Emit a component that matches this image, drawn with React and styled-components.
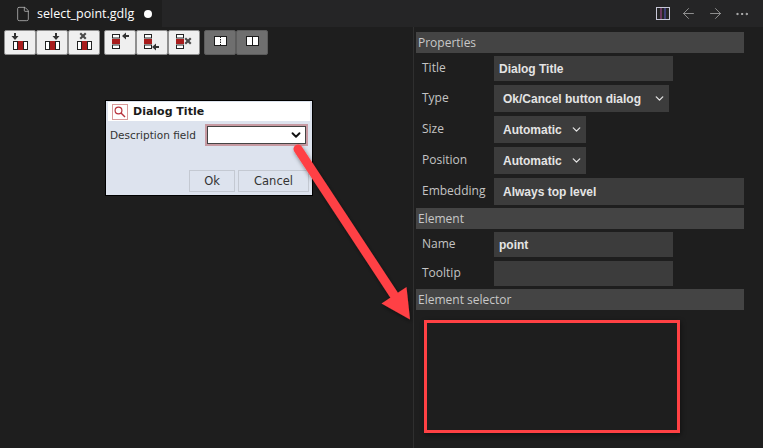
import React from "react";
import styled, { createGlobalStyle } from "styled-components";
import { File, ArrowLeft, ArrowRight, Ellipsis, ChevronDown } from "lucide-react";

const Global = createGlobalStyle`
  html, body { margin: 0; padding: 0; background: #1e1e1e; }
  body { width: 763px; height: 448px; overflow: hidden; font-family: "Open Sans", "Liberation Sans", sans-serif; }
`;

// marker drawn beside the little box groups in the toolbar
const Marker = ({ kind, x, y }) => {
  if (kind === "down") return <path d={`M${x - 1} ${y - 3}h2v3h2.5l-3.5 4-3.5-4h2.5z`} fill="#333" />;
  if (kind === "left") return <path d={`M${x} ${y}l4-3.5v2.5h3v2h-3v2.5z`} fill="#333" />;
  return <path d={`M${x - 3.5} ${y - 2}l1.5-1.5 2 2 2-2 1.5 1.5-2 2 2 2-1.5 1.5-2-2-2 2-1.5-1.5 2-2z`} fill="#4a4a4a" />;
};

const HGroup = ({ marker, mx }) => (
  <svg width="32" height="25" viewBox="0 0 32 25">
    <rect x="9.5" y="11.5" width="4" height="8" fill="#fff" stroke="#222" />
    <rect x="14" y="11" width="5" height="9" fill="#a81c1c" />
    <rect x="19.5" y="11.5" width="4" height="8" fill="#fff" stroke="#222" />
    <Marker kind={marker} x={mx} y={6} />
  </svg>
);

const VGroup = ({ marker, mx, my }) => (
  <svg width="32" height="25" viewBox="0 0 32 25">
    <rect x="8.5" y="4.5" width="7" height="3.5" fill="#fff" stroke="#222" />
    <rect x="8" y="9" width="8" height="5" fill="#a81c1c" />
    <rect x="8.5" y="15" width="7" height="3.5" fill="#fff" stroke="#222" />
    <Marker kind={marker} x={mx} y={my} />
  </svg>
);

const BookIcon = ({ dashed }) => (
  <svg width="32" height="25" viewBox="0 0 32 25">
    <rect x="10.5" y="6.5" width="12" height="9" fill="#fff" stroke="#1c1c1c" />
    <path d="M16.5 6.5v9" stroke="#1c1c1c" strokeDasharray={dashed ? "1.5 1" : "none"} />
  </svg>
);

const SplitIcon = () => (
  <svg width="14" height="14" viewBox="0 0 14 14">
    <rect x="0.5" y="0.5" width="13" height="12" fill="none" stroke="#c8c8d8" />
    <path d="M5 1v11" stroke="#b04a9a" />
    <path d="M9 1v11" stroke="#5a5ac8" />
  </svg>
);

const SearchIcon = () => (
  <svg width="16" height="16" viewBox="0 0 16 16">
    <rect x="0.5" y="0.5" width="15" height="15" fill="#fff" stroke="#d89a9a" />
    <circle cx="6.5" cy="6.5" r="3.4" fill="none" stroke="#b8323c" strokeWidth="1.2" />
    <path d="M9 9l4 4" stroke="#b8323c" strokeWidth="1.4" />
  </svg>
);

const PropertyRow = ({ label, children, tall }) => (
  <Row $tall={tall}>
    <RowLabel $tall={tall}>{label}</RowLabel>
    {children}
  </Row>
);

export default function App() {
  return (
    <Page>
      <Global />
      <TabBar>
        <Tab>
          <File size={16} strokeWidth={1.1} color="#c5c5c5" />
          <TabName>select_point.gdlg</TabName>
          <Dot />
        </Tab>
        <TabActions>
          <SplitIcon />
          <ArrowLeft size={17} strokeWidth={1.2} color="#a0a0a0" />
          <ArrowRight size={17} strokeWidth={1.2} color="#a0a0a0" />
          <Ellipsis size={16} strokeWidth={1.4} color="#c5c5c5" />
        </TabActions>
      </TabBar>
      <Split>
        <Designer>
          <Toolbar>
            <ToolGroup>
              <ToolButton><HGroup marker="down" mx={11} /></ToolButton>
              <ToolButton><HGroup marker="down" mx={20} /></ToolButton>
              <ToolButton><HGroup marker="x" mx={15} /></ToolButton>
            </ToolGroup>
            <ToolGroup>
              <ToolButton><VGroup marker="left" mx={18} my={6} /></ToolButton>
              <ToolButton><VGroup marker="left" mx={16} my={17} /></ToolButton>
              <ToolButton><VGroup marker="x" mx={20} my={11} /></ToolButton>
            </ToolGroup>
            <ToolGroup>
              <ToolButton $dark><BookIcon dashed /></ToolButton>
              <ToolButton $dark><BookIcon /></ToolButton>
            </ToolGroup>
          </Toolbar>
          <Dialog>
            <DialogTitle>
              <SearchIcon />
              <span>Dialog Title</span>
            </DialogTitle>
            <FieldRow>
              <FieldLabel>Description field</FieldLabel>
              <FieldSelect>
                <ChevronDown size={14} strokeWidth={3.2} color="#111" />
              </FieldSelect>
            </FieldRow>
            <DialogButtons>
              <DialogButton $w={46}>Ok</DialogButton>
              <DialogButton $w={71}>Cancel</DialogButton>
            </DialogButtons>
          </Dialog>
        </Designer>
        <Panel>
          <SectionHeader>Properties</SectionHeader>
          <PropertyRow label="Title"><TextValue $w={179}>Dialog Title</TextValue></PropertyRow>
          <PropertyRow label="Type" tall>
            <SelectValue $w={175}>Ok/Cancel button dialog<ChevronDown size={13} strokeWidth={2.4} /></SelectValue>
          </PropertyRow>
          <PropertyRow label="Size" tall>
            <SelectValue $w={92}>Automatic<ChevronDown size={13} strokeWidth={2.4} /></SelectValue>
          </PropertyRow>
          <PropertyRow label="Position" tall>
            <SelectValue $w={92}>Automatic<ChevronDown size={13} strokeWidth={2.4} /></SelectValue>
          </PropertyRow>
          <PropertyRow label="Embedding" tall>
            <SelectValue $w={250}>Always top level</SelectValue>
          </PropertyRow>
          <SectionHeader $gap={-1}>Element</SectionHeader>
          <PropertyRow label="Name"><TextValue $w={179}>point</TextValue></PropertyRow>
          <PropertyRow label="Tooltip"><TextValue $w={179} /></PropertyRow>
          <SectionHeader $gap={-1}>Element selector</SectionHeader>
        </Panel>
      </Split>
      <Highlight />
      <Annotation width="763" height="448" viewBox="0 0 763 448">
        <defs>
          <filter id="shade" x="-20%" y="-20%" width="140%" height="140%">
            <feDropShadow dx="1" dy="2" stdDeviation="2" floodColor="#000" floodOpacity="0.45" />
          </filter>
        </defs>
        <g filter="url(#shade)">
          <path d="M298 149L394 295" stroke="#ff4144" strokeWidth="9" strokeLinecap="round" />
          <path d="M381.5 303.5L406.5 287L410 319.5z" fill="#ff4144" />
        </g>
      </Annotation>
    </Page>
  );
}

const Page = styled.div`
  position: relative;
  width: 763px;
  height: 448px;
  overflow: hidden;
  background: #1e1e1e;
  display: flex;
  flex-direction: column;
`;
const TabBar = styled.div`
  height: 27px;
  flex: none;
  background: #252526;
  display: flex;
  justify-content: space-between;
  align-items: stretch;
`;
const Tab = styled.div`
  width: 162px;
  background: #1e1e1e;
  display: flex;
  align-items: center;
  padding-left: 15px;
  box-sizing: border-box;
`;
const TabName = styled.span`
  margin-left: 6px;
  color: #ffffff;
  font-size: 12.5px;
  white-space: nowrap;
`;
const Dot = styled.span`
  width: 8px;
  height: 8px;
  border-radius: 50%;
  background: #fff;
  margin-left: 10px;
`;
const TabActions = styled.div`
  display: flex;
  align-items: center;
  gap: 10px;
  padding-right: 13px;
`;
const Split = styled.div`
  flex: 1;
  display: flex;
  min-height: 0;
`;
const Designer = styled.div`
  width: 414px;
  flex: none;
  box-sizing: border-box;
  border-right: 1px solid #2f2f2f;
  padding: 3px 0 0 4px;
`;
const Toolbar = styled.div`
  display: flex;
  gap: 4px;
`;
const ToolGroup = styled.div`
  display: flex;
`;
const ToolButton = styled.div`
  width: 32px;
  height: 25px;
  box-sizing: border-box;
  border-radius: 2px;
  background: ${p => (p.$dark ? "#6f6f6f" : "#efefef")};
  border: 1px solid ${p => (p.$dark ? "#5c5c5c" : "#8f8f8f")};
  display: flex;
  align-items: center;
  justify-content: center;
  & > svg { flex: none; }
`;
const Dialog = styled.div`
  width: 208px;
  height: 96px;
  margin: 45px 0 0 101px;
  box-sizing: border-box;
  border: 1px solid #000;
  background: #dde3ee;
  padding: 1px 2px;
  color: #222;
  font-family: "DejaVu Sans", "Liberation Sans", sans-serif;
  display: flex;
  flex-direction: column;
`;
const DialogTitle = styled.div`
  height: 19px;
  background: #fff;
  display: flex;
  align-items: center;
  gap: 5px;
  padding-left: 4px;
  font-size: 11px;
  font-weight: 700;
  color: #1a1a1a;
`;
const FieldRow = styled.div`
  display: flex;
  align-items: center;
  margin-top: 5px;
  padding-left: 2px;
`;
const FieldLabel = styled.span`
  font-size: 10.5px;
  color: #333;
  white-space: nowrap;
  width: 97px;
  flex: none;
`;
const FieldSelect = styled.div`
  width: 95px;
  height: 16px;
  box-sizing: content-box;
  background: #fff;
  border: 1px solid #444;
  outline: 2px solid #c79aa2;
  display: flex;
  align-items: center;
  justify-content: flex-end;
  padding-right: 2px;
`;
const DialogButtons = styled.div`
  margin-top: auto;
  margin-bottom: 2px;
  padding-right: 1px;
  display: flex;
  justify-content: flex-end;
  gap: 3px;
`;
const DialogButton = styled.div`
  width: ${p => p.$w}px;
  height: 22px;
  box-sizing: border-box;
  border: 1px solid #c4c9d2;
  color: #333;
  font-size: 11.5px;
  display: flex;
  align-items: center;
  justify-content: center;
`;
const Panel = styled.div`
  width: 328px;
  margin-left: 2px;
  padding-top: 5px;
  display: flex;
  flex-direction: column;
`;
const SectionHeader = styled.div`
  height: 21px;
  margin-top: ${p => p.$gap || 0}px;
  background: #444444;
  color: #c8c8c8;
  font-size: 12px;
  line-height: 21px;
  padding-left: 2px;
  margin-bottom: 3px;
`;
const Row = styled.div`
  height: ${p => (p.$tall ? 27 : 25)}px;
  margin-bottom: 4px;
  display: flex;
  align-items: stretch;
`;
const RowLabel = styled.div`
  width: 78px;
  flex: none;
  padding: ${p => (p.$tall ? 4 : 3)}px 0 0 6px;
  box-sizing: border-box;
  color: #c4c4c4;
  font-size: 12px;
  white-space: nowrap;
`;
const TextValue = styled.div`
  width: ${p => p.$w}px;
  box-sizing: border-box;
  background: #3c3c3c;
  color: #e4e4e4;
  font-family: "Liberation Sans", sans-serif;
  font-weight: 700;
  font-size: 12px;
  padding-left: 5px;
  display: flex;
  align-items: center;
`;
const SelectValue = styled.div`
  width: ${p => p.$w}px;
  box-sizing: border-box;
  background: #3c3c3c;
  color: #e4e4e4;
  font-family: "Liberation Sans", sans-serif;
  font-weight: 700;
  font-size: 12px;
  padding: 0 3px 0 9px;
  display: flex;
  align-items: center;
  justify-content: space-between;
  white-space: nowrap;
`;
const Highlight = styled.div`
  position: absolute;
  left: 424px;
  top: 320px;
  width: 256px;
  height: 113px;
  box-sizing: border-box;
  border: 3px solid #ff4144;
  box-shadow: 1px 2px 5px rgba(0, 0, 0, 0.45);
`;
const Annotation = styled.svg`
  position: absolute;
  left: 0;
  top: 0;
  pointer-events: none;
`;
